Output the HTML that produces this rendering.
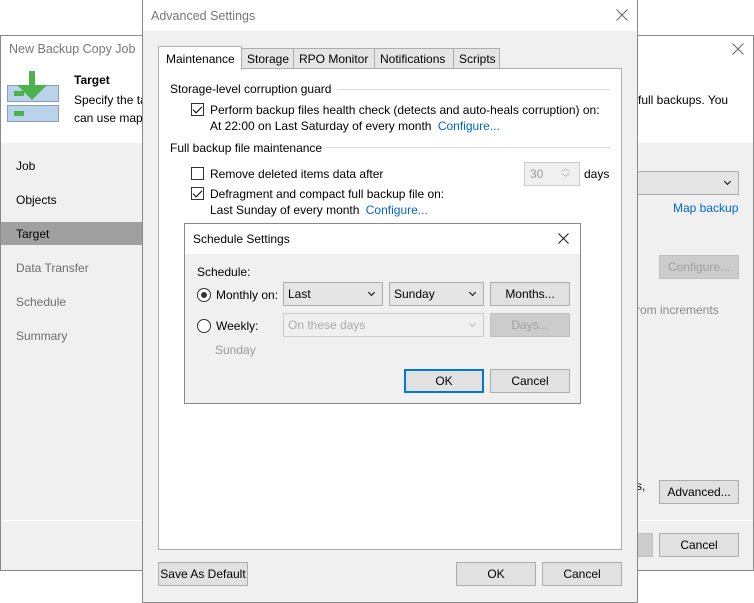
<!DOCTYPE html>
<html><head><meta charset="utf-8"><style>
*{box-sizing:border-box;margin:0;padding:0}
body{width:754px;height:603px;background:#fff;position:relative;overflow:hidden;font-family:"Liberation Sans",Arial,sans-serif;font-size:12px;color:#000}
.a{position:absolute;white-space:nowrap}
.btn{position:absolute;background:#e1e1e1;border:1px solid #adadad;text-align:center;line-height:22px;height:24px}
.dis{color:#a0a0a0;background:#ccc;border-color:#bfbfbf}
.link{color:#0066cc}
.cb{position:absolute;width:13px;height:13px;border:1px solid #333;background:#fff}
.cb.on::after{content:"";position:absolute;left:3px;top:0px;width:4px;height:8px;border:solid #000;border-width:0 1.2px 1.2px 0;transform:rotate(45deg)}
.sep{position:absolute;height:1px;background:#dcdcdc}
.combo{position:absolute;height:24px;border:1px solid #adadad;background:#e5e5e5;line-height:22px;padding-left:4px}
.chev{position:absolute;right:8px;top:7px;width:5px;height:5px;border:solid #000;border-width:0 1.5px 1.5px 0;transform:rotate(45deg)}
</style></head><body>
<!-- back window -->
<div class="a" style="left:0;top:35px;width:754px;height:536px;border:1px solid #888;background:#f0f0f0"></div>
<div class="a" style="left:1px;top:36px;width:752px;height:107px;background:#fff"></div>
<div class="a" style="left:9px;top:42px;color:#777;font-size:12.5px">New Backup Copy Job</div>
<svg class="a" style="left:732px;top:43px" width="12" height="12"><path d="M0.5 0.5L11.5 11.5M11.5 0.5L0.5 11.5" stroke="#666" stroke-width="1"/></svg>
<svg class="a" style="left:7px;top:70px" width="52" height="52"><rect x="0.5" y="15.5" width="51" height="16" fill="#b9d3ec" stroke="#8a9fb3"/><rect x="0.5" y="35.5" width="51" height="16" fill="#b9d3ec" stroke="#8a9fb3"/><rect x="7" y="21" width="10" height="5" fill="#4cb34c"/><rect x="7" y="41" width="10" height="5" fill="#4cb34c"/><path d="M22 1h6v14h12l-15 15-15-15h12z" fill="#4cb34c"/></svg>
<div class="a" style="left:74px;top:73px;font-weight:bold">Target</div>
<div class="a" style="left:74px;top:93px">Specify the ta</div>
<div class="a" style="left:74px;top:111px">can use map</div>
<div class="a" style="left:638px;top:93px">full backups. You</div>
<div class="a" style="left:1px;top:222px;width:141px;height:23px;background:#a0a0a0"></div>
<div class="a" style="left:16px;top:159px">Job</div>
<div class="a" style="left:16px;top:193px">Objects</div>
<div class="a" style="left:16px;top:227px">Target</div>
<div class="a" style="left:16px;top:261px;color:#6d6d6d">Data Transfer</div>
<div class="a" style="left:16px;top:295px;color:#6d6d6d">Schedule</div>
<div class="a" style="left:16px;top:329px;color:#6d6d6d">Summary</div>
<div class="combo" style="left:620px;top:171px;width:119px"><span class="chev"></span></div>
<div class="a link" style="left:673px;top:201px">Map backup</div>
<div class="btn dis" style="left:659px;top:255px;width:80px">Configure...</div>
<div class="a" style="left:636px;top:303px;color:#888">rom increments</div>
<div class="a" style="left:636px;top:479px">s,</div>
<div class="btn" style="left:659px;top:480px;width:80px">Advanced...</div>
<div class="a" style="left:1px;top:520px;width:752px;height:1px;background:#fff"></div>
<div class="btn dis" style="left:620px;top:533px;width:33px"></div>
<div class="btn" style="left:659px;top:533px;width:80px">Cancel</div>
<!-- advanced settings -->
<div class="a" style="left:142px;top:0;width:496px;height:603px;border:1px solid #888;background:#f0f0f0"></div>
<div class="a" style="left:143px;top:0;width:494px;height:31px;background:#fff"></div>
<div class="a" style="left:151px;top:9px;color:#777;font-size:12.5px">Advanced Settings</div>
<svg class="a" style="left:616px;top:9px" width="12" height="12"><path d="M0.5 0.5L11.5 11.5M11.5 0.5L0.5 11.5" stroke="#666" stroke-width="1"/></svg>
<div class="a" style="left:158px;top:68px;width:464px;height:482px;border:1px solid #adadad;background:#fff"></div>
<div class="a" style="left:241px;top:48px;width:53px;height:21px;border:1px solid #adadad;background:#e5e5e5;padding:3px 0 0 5px">Storage</div>
<div class="a" style="left:293px;top:48px;width:82px;height:21px;border:1px solid #adadad;background:#e5e5e5;padding:3px 0 0 5px">RPO Monitor</div>
<div class="a" style="left:374px;top:48px;width:80px;height:21px;border:1px solid #adadad;background:#e5e5e5;padding:3px 0 0 5px">Notifications</div>
<div class="a" style="left:453px;top:48px;width:47px;height:21px;border:1px solid #adadad;background:#e5e5e5;padding:3px 0 0 5px">Scripts</div>
<div class="a" style="left:158px;top:46px;width:84px;height:24px;border:1px solid #adadad;border-bottom:none;background:#fff;padding:5px 0 0 7px">Maintenance</div>
<div class="a" style="left:170px;top:82px">Storage-level corruption guard</div>
<div class="sep" style="left:337px;top:89px;width:273px"></div>
<div class="cb on" style="left:191px;top:103px"></div>
<div class="a" style="left:210px;top:103px">Perform backup files health check (detects and auto-heals corruption) on:</div>
<div class="a" style="left:210px;top:119px">At 22:00 on Last Saturday of every month <span class="link" style="margin-left:3px">Configure...</span></div>
<div class="a" style="left:170px;top:141px">Full backup file maintenance</div>
<div class="sep" style="left:325px;top:147px;width:285px"></div>
<div class="cb" style="left:191px;top:167px"></div>
<div class="a" style="left:210px;top:167px">Remove deleted items data after</div>
<div class="a" style="left:524px;top:162px;width:56px;height:24px;border:1px solid #ccc;background:#f0f0f0;color:#999;padding:4px 0 0 5px">30<span style="position:absolute;left:36px;top:0;font-size:9px;color:#aaa;line-height:10px">︿<br>﹀</span></div>
<div class="a" style="left:584px;top:167px">days</div>
<div class="cb on" style="left:191px;top:187px"></div>
<div class="a" style="left:210px;top:187px">Defragment and compact full backup file on:</div>
<div class="a" style="left:210px;top:203px">Last Sunday of every month <span class="link" style="margin-left:3px">Configure...</span></div>
<div class="btn" style="left:158px;top:562px;width:90px">Save As Default</div>
<div class="btn" style="left:456px;top:562px;width:80px">OK</div>
<div class="btn" style="left:542px;top:562px;width:80px">Cancel</div>
<!-- schedule settings -->
<div class="a" style="left:184px;top:223px;width:397px;height:181px;border:1px solid #888;background:#f0f0f0"></div>
<div class="a" style="left:185px;top:224px;width:395px;height:30px;background:#fff"></div>
<div class="a" style="left:193px;top:232px">Schedule Settings</div>
<svg class="a" style="left:558px;top:233px" width="11" height="11"><path d="M0.5 0.5L10.5 10.5M10.5 0.5L0.5 10.5" stroke="#222" stroke-width="1.1"/></svg>
<div class="a" style="left:197px;top:265px">Schedule:</div>
<div class="a" style="left:197px;top:288px;width:14px;height:14px;border:1px solid #333;border-radius:50%;background:#fff"><div style="position:absolute;left:3px;top:3px;width:6px;height:6px;border-radius:50%;background:#333"></div></div>
<div class="a" style="left:216px;top:288px">Monthly on:</div>
<div class="combo" style="left:283px;top:282px;width:100px">Last<span class="chev"></span></div>
<div class="combo" style="left:389px;top:282px;width:95px">Sunday<span class="chev"></span></div>
<div class="btn" style="left:490px;top:282px;width:80px">Months...</div>
<div class="a" style="left:197px;top:319px;width:14px;height:14px;border:1px solid #333;border-radius:50%;background:#fff"></div>
<div class="a" style="left:216px;top:319px">Weekly:</div>
<div class="combo" style="left:283px;top:313px;width:201px;background:#f0f0f0;border-color:#ccc;color:#aaa">On these days<span class="chev" style="border-color:#bbb"></span></div>
<div class="btn dis" style="left:490px;top:313px;width:80px">Days...</div>
<div class="a" style="left:215px;top:343px;color:#999">Sunday</div>
<div class="btn" style="left:404px;top:369px;width:80px;border:2px solid #0078d7;line-height:20px">OK</div>
<div class="btn" style="left:490px;top:369px;width:80px">Cancel</div>
</body></html>
